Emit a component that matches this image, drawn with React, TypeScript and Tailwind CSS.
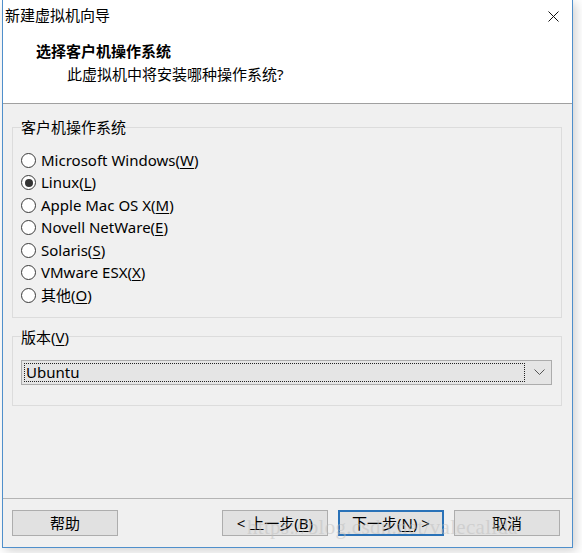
import React, { useState } from 'react';

const osList = [
  { label: 'Microsoft Windows', key: 'W' },
  { label: 'Linux', key: 'L' },
  { label: 'Apple Mac OS X', key: 'M' },
  { label: 'Novell NetWare', key: 'E' },
  { label: 'Solaris', key: 'S' },
  { label: 'VMware ESX', key: 'X' },
  { label: '其他', key: 'O' },
];

const font = "font-['Noto_Sans','Noto_Sans_CJK_SC',sans-serif]";

const Radio: React.FC<{ checked: boolean }> = ({ checked }) => (
  <span className="w-[15px] h-[15px] rounded-full border border-[#3a3a3a] bg-white flex items-center justify-center shrink-0">
    {checked && <span className="w-[8px] h-[8px] rounded-full bg-[#333]" />}
  </span>
);

const Btn: React.FC<{ children: React.ReactNode; primary?: boolean }> = ({ children, primary }) => (
  <button
    className={
      'w-[106px] h-[26px] bg-[#e1e1e1] text-[15px] leading-none text-black flex items-center justify-center ' +
      (primary ? 'border-2 border-[#2a72b8]' : 'border border-[#adadad]')
    }
  >
    {children}
  </button>
);

const App: React.FC = () => {
  const [selected, setSelected] = useState(1);

  return (
    <div className={`w-[582px] h-[553px] bg-white relative overflow-hidden pl-[2px] ${font}`}>
      <div className="w-[571px] h-[548px] border border-t-0 border-[#4f8fcb] bg-[#f0f0f0] flex flex-col shadow-[3px_3px_10px_rgba(0,0,0,0.18)]">
        {/* title bar */}
        <div className="h-[31px] bg-white flex items-center justify-between pl-[2px] pr-[13px]">
          <span className="text-[15px] text-black leading-none">新建虚拟机向导</span>
          <svg width="11" height="11" viewBox="0 0 11 11" className="mt-[2px]">
            <path d="M0.5 0.5 L10.5 10.5 M10.5 0.5 L0.5 10.5" stroke="#111" strokeWidth="1" />
          </svg>
        </div>

        {/* header */}
        <div className="h-[73px] bg-white border-b border-[#a0a0a0] pt-[9px] text-black">
          <div className="pl-[33px] text-[15px] font-bold leading-[22px]">选择客户机操作系统</div>
          <div className="pl-[64px] text-[15px] leading-[22px] mt-[1px]">此虚拟机中将安装哪种操作系统?</div>
        </div>

        {/* body */}
        <div className="flex-1 flex flex-col pl-[9px] pr-[10px] pt-[13px]">
          <fieldset className="border border-[#dcdcdc] pl-[8px] pb-[10px]">
            <legend className="text-[15px] leading-[20px] text-black">客户机操作系统</legend>
            <div className="mt-[12px] flex flex-col">
              {osList.map((os, i) => (
                <label
                  key={os.key}
                  className="h-[22.5px] flex items-center gap-[5px] text-[15px] text-black cursor-default"
                  onClick={() => setSelected(i)}
                >
                  <Radio checked={selected === i} />
                  <span className="leading-none">
                    {os.label}(<span className="underline underline-offset-2">{os.key}</span>)
                  </span>
                </label>
              ))}
            </div>
          </fieldset>

          <fieldset className="border border-[#dcdcdc] pl-[8px] pr-[9px] pb-[20px] mt-[9px]">
            <legend className="text-[15px] leading-[20px] text-black">
              版本(<span className="underline underline-offset-2">V</span>)
            </legend>
            <div className="mt-[13px] h-[25px] bg-[#e5e5e5] border border-[#acacac] flex items-center pl-[2px] pr-[6px]">
              <div className="flex-1 h-[19px] border border-dotted border-[#222] flex items-center pl-[1px] text-[15px] text-black leading-none">
                Ubuntu
              </div>
              <svg width="11" height="7" viewBox="0 0 11 7" className="ml-[9px]">
                <path d="M0.5 0.5 L5.5 5.5 L10.5 0.5" stroke="#555" strokeWidth="1" fill="none" />
              </svg>
            </div>
          </fieldset>

          {/* footer */}
          <div className="mt-auto -ml-[9px] -mr-[10px] border-t border-[#b4b4b4] pt-[11px] pb-[11px] pl-[9px] flex">
            <Btn>帮助</Btn>
            <div className="ml-[104px] flex gap-[10px]">
              <Btn>
                &lt; 上一步(<span className="underline underline-offset-2">B</span>)
              </Btn>
              <Btn primary>
                下一步(<span className="underline underline-offset-2">N</span>) &gt;
              </Btn>
              <Btn>取消</Btn>
            </div>
          </div>
        </div>
      </div>

      {/* watermark */}
      <div className="absolute left-[247px] top-[512px] text-[21px] text-[#bdbdbd]/50 font-['Liberation_Serif',serif] tracking-[0.3px] pointer-events-none whitespace-nowrap">
        https://blog.csdn.net/valecalida
      </div>
    </div>
  );
};

export default App;
